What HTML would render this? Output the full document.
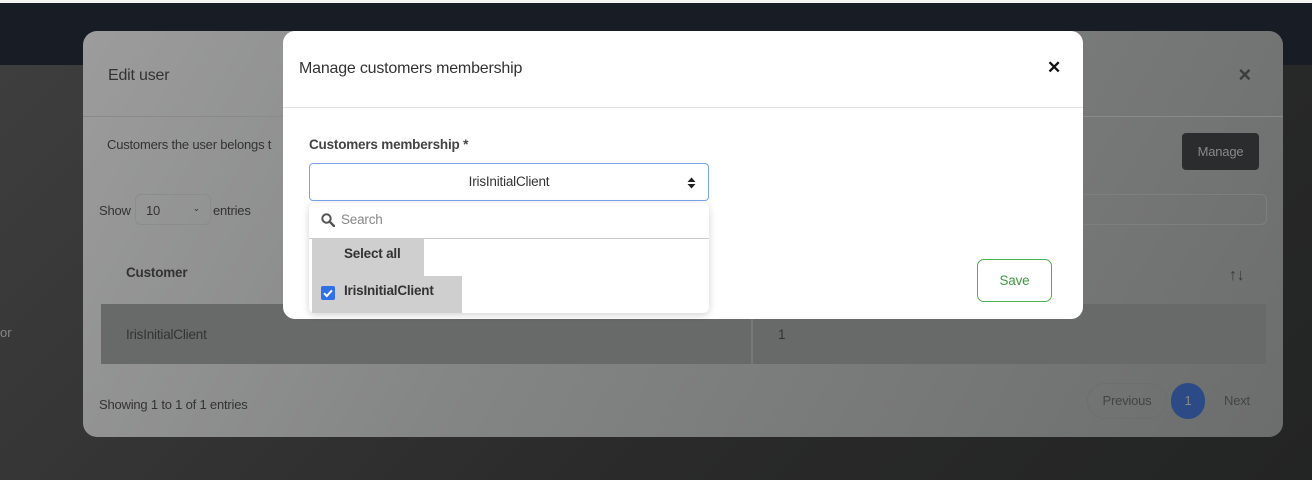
<!DOCTYPE html>
<html><head><style>
*{box-sizing:border-box;margin:0;padding:0}
body{width:1312px;height:480px;overflow:hidden;position:relative;font-family:"Liberation Sans",sans-serif;background:#2a2b2c}
.top{position:absolute;left:0;top:0;width:1312px;height:3px;background:#f4f4f4}
.nav{position:absolute;left:0;top:3px;width:1312px;height:62px;background:#181c25}
.bg{position:absolute;left:0;top:65px;width:1312px;height:415px;background:linear-gradient(135deg,#3e3e3e 0%,#2a2a2a 60%,#232424 100%)}
.edit{position:absolute;left:83px;top:31px;width:1200px;height:406px;border-radius:14px;background:linear-gradient(120deg,#9c9c9c 0%,#848585 40%,#6c6d6d 100%);color:#3a3a3a;letter-spacing:-0.2px}
.edit .t{position:absolute;left:25px;top:36px;font-size:16px;color:#333}
.edit .x{position:absolute;right:32px;top:31px;font-size:22px;font-weight:bold;color:#3c3c3c}
.edit .hr{position:absolute;left:0;right:0;top:85px;border-top:1px solid #8a8a8a}
.abs{position:absolute}
.manage{left:1099px;top:102px;width:77px;height:37px;background:#2b2c2e;border-radius:4px;color:#888;font-size:13px;text-align:center;line-height:37px}
.row{left:18px;top:273px;width:1165px;height:60px;background:#686969}
.modal{position:absolute;left:283px;top:31px;width:800px;height:288px;background:#fff;border-radius:12px;letter-spacing:-0.2px}
.modal .t{position:absolute;left:16px;top:29px;font-size:16px;color:#333}
.modal .x{position:absolute;right:22px;top:27px;font-size:17px;font-weight:bold;color:#111}
.modal .hr{position:absolute;left:0;right:0;top:76px;border-top:1px solid #e3e3e3}
.lab{left:26px;top:106px;font-size:13.5px;font-weight:bold;color:#444}
.sel{left:26px;top:132px;width:400px;height:38px;border:1px solid #7aa4e8;border-radius:4px;text-align:center;line-height:36px;font-size:13.5px;color:#333}
.dd{left:26px;top:172px;width:400px;height:110px;background:#fff;border-radius:6px;box-shadow:0 2px 8px rgba(0,0,0,.18)}
.save{left:694px;top:228px;width:75px;height:43px;border:1px solid #4caf50;border-radius:7px;color:#3c9a40;font-size:13.5px;text-align:center;line-height:41px}
</style></head><body>
<div class="top"></div><div class="nav"></div><div class="bg"></div>
<div class="abs" style="left:0;top:325px;font-size:13px;color:#888">or</div>
<div class="edit">
<div class="t">Edit user</div><div class="x">×</div><div class="hr"></div>
<div class="abs" style="left:24px;top:106px;font-size:13px;color:#333">Customers the user belongs t</div>
<div class="abs manage">Manage</div>
<div class="abs" style="left:16px;top:172px;font-size:13px;color:#333">Show</div>
<div class="abs" style="left:52px;top:163px;width:76px;height:31px;border:1px solid #8c8c8c;border-radius:6px;font-size:13px;padding:8px 10px;color:#333">10<span style="float:right;font-size:9px">⌄</span></div>
<div class="abs" style="left:130px;top:172px;font-size:13px;color:#333">entries</div>
<div class="abs" style="left:760px;top:163px;width:424px;height:31px;border:1px solid #7d7e7e;border-radius:6px"></div>
<div class="abs" style="left:43px;top:234px;font-size:13.5px;font-weight:bold;color:#333">Customer</div>
<div class="abs" style="left:1146px;top:236px;font-size:16px;color:#3a3a3a">↑↓</div>
<div class="abs row"></div>
<div class="abs" style="left:668px;top:273px;width:2px;height:60px;background:#777"></div>
<div class="abs" style="left:43px;top:296px;font-size:13.5px;color:#333">IrisInitialClient</div>
<div class="abs" style="left:695px;top:296px;font-size:13.5px;color:#333">1</div>
<div class="abs" style="left:16px;top:366px;font-size:13px;color:#333">Showing 1 to 1 of 1 entries</div>
<div class="abs" style="left:1004px;top:352px;width:80px;height:36px;border:1px solid #6e6e6e;border-radius:18px;text-align:center;line-height:34px;font-size:13px;color:#444">Previous</div>
<div class="abs" style="left:1088px;top:352px;width:34px;height:36px;background:#2b4a86;border-radius:18px;text-align:center;line-height:36px;font-size:13px;color:#888">1</div>
<div class="abs" style="left:1126px;top:352px;width:56px;height:36px;border:1px solid #6e6e6e;border-radius:18px;text-align:center;line-height:34px;font-size:13px;color:#444">Next</div>
</div>
<div class="modal">
<div class="t">Manage customers membership</div><div class="x">✕</div><div class="hr"></div>
<div class="abs lab">Customers membership *</div>
<div class="abs sel">IrisInitialClient<svg style="position:absolute;right:12px;top:13px" width="9" height="12" viewBox="0 0 9 12"><path d="M0.5 5L4.5 0.5 8.5 5Z M0.5 7L4.5 11.5 8.5 7Z" fill="#222"/></svg></div>
<div class="abs dd">
<svg style="position:absolute;left:12px;top:10px" width="14" height="14" viewBox="0 0 14 14"><circle cx="5.5" cy="5.5" r="4.2" fill="none" stroke="#555" stroke-width="2"/><path d="M8.5 8.5L13 13" stroke="#555" stroke-width="2.4" stroke-linecap="round"/></svg>
<div class="abs" style="left:32px;top:9px;font-size:13.5px;color:#888">Search</div>
<div class="abs" style="left:0;right:0;top:35px;border-top:1px solid #ccc"></div>
<div class="abs" style="left:3px;top:36px;width:112px;height:37px;background:#cfcfcf"></div>
<div class="abs" style="left:3px;top:73px;width:150px;height:37px;background:#cfcfcf"></div>
<div class="abs" style="left:35px;top:43px;font-size:13.5px;font-weight:bold;color:#333">Select all</div>
<div class="abs" style="left:12px;top:83px;width:14px;height:14px;background:#2f6fe8;border-radius:2px"><svg width="14" height="14" viewBox="0 0 14 14"><path d="M3 7.2L5.8 10 11 4.3" fill="none" stroke="#fff" stroke-width="2"/></svg></div>
<div class="abs" style="left:35px;top:80px;font-size:13.5px;font-weight:bold;color:#333">IrisInitialClient</div>
</div>
<div class="abs save">Save</div>
</div>
</body></html>
